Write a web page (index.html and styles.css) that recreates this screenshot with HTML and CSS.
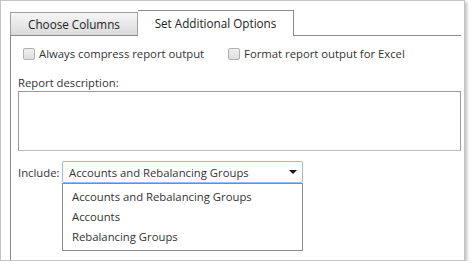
FILE: index.html
```html
<!DOCTYPE html>
<html lang="en">
<head>
    <meta charset="UTF-8">
    <meta name="viewport" content="width=device-width, initial-scale=1.0">
    <title>Report Options</title>
    <link rel="stylesheet" href="styles.css">
</head>
<body>
    <div class="dialog">
        <div class="tabs">
            <div class="tab">Choose Columns</div>
            <div class="tab active">Set Additional Options</div>
        </div>

        <div class="panel">
            <div class="check-row">
                <label class="check"><span class="box"></span>Always compress report output</label>
                <label class="check second"><span class="box"></span>Format report output for Excel</label>
            </div>

            <div class="field-label">Report description:</div>
            <div class="textarea"></div>

            <div class="include-row">
                <span class="include-label">Include:</span>
                <div class="select-wrap">
                    <div class="select">
                        <span>Accounts and Rebalancing Groups</span>
                        <span class="arrow"></span>
                    </div>
                    <ul class="options">
                        <li>Accounts and Rebalancing Groups</li>
                        <li>Accounts</li>
                        <li>Rebalancing Groups</li>
                    </ul>
                </div>
            </div>
        </div>
    </div>
</body>
</html>
```

FILE: styles.css
```css
body {
    margin: 0;
    background-color: #fff;
    font-family: "Open Sans", "Liberation Sans", sans-serif;
    font-size: 11.3px;
    color: #333;
}
.dialog {
    width: 454px;
    height: 250px;
    padding: 9px 0 0 9px;
    border: 1px solid #c4c4c4;
    box-shadow: 2px 2px 3px rgba(0,0,0,0.25);
    display: flex;
    flex-direction: column;
}
.tabs {
    display: flex;
    align-items: flex-end;
    width: 451px;
    height: 25px;
    border-bottom: 1px solid #8a8a8a;
}
.tab {
    width: 126px;
    height: 22px;
    line-height: 22px;
    text-align: center;
    border: 1px solid #a0a0a0;
    border-bottom: none;
    background: linear-gradient(#f6f6f6, #dadada);
    color: #222;
    font-size: 11.7px;
}
.tab.active {
    width: 155px;
    height: 25px;
    line-height: 24px;
    background: #fff;
    border-color: #8a8a8a;
    border-left: none;
    margin-bottom: -1px;
}
.panel {
    flex: 1;
    border-left: 1px solid #8a8a8a;
    padding: 0 0 0 7px;
}
.check-row {
    display: flex;
    padding: 11px 0 0 5px;
    height: 13px;
}
.check {
    display: flex;
    align-items: center;
    gap: 4px;
}
.check.second {
    margin-left: 24px;
}
.box {
    width: 10px;
    height: 10px;
    border: 1px solid #b0b0b0;
    border-radius: 2px;
    background: linear-gradient(#f0f0f0, #dedede);
}
.field-label {
    margin-top: 15px;
    height: 16px;
}
.textarea {
    width: 441px;
    height: 58px;
    border: 1px solid #9a9a9a;
    border-bottom-color: #bdbdbd;
}
.include-row {
    display: flex;
    align-items: center;
    margin-top: 10px;
}
.include-label {
    width: 44px;
}
.select-wrap {
    position: relative;
}
.select {
    display: flex;
    align-items: center;
    justify-content: space-between;
    width: 228px;
    height: 20px;
    padding: 0 5px 0 6px;
    border: 1px solid #9cbbe8;
    border-radius: 2px;
}
.arrow {
    width: 0;
    height: 0;
    border-left: 4px solid transparent;
    border-right: 4px solid transparent;
    border-top: 4px solid #111;
}
.options {
    position: absolute;
    left: 0;
    top: 22px;
    width: 239px;
    margin: 0;
    padding: 3px 0 3px;
    list-style: none;
    border: 1px solid #8a8a8a;
    background: #fff;
}
.options li {
    height: 20px;
    line-height: 20px;
    padding-left: 9px;
}
```
